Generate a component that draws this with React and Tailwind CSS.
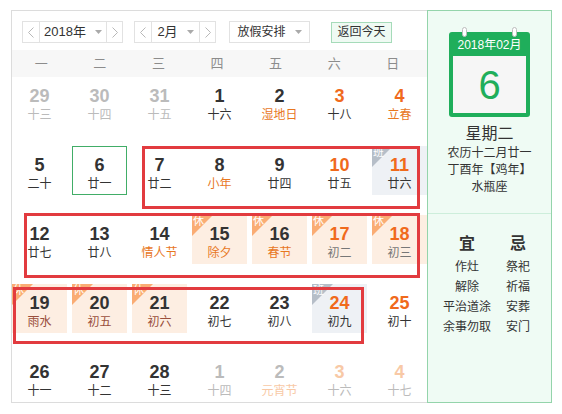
import React from 'react';

const FONT = "font-['Liberation_Sans','Noto_Sans_CJK_SC',sans-serif]";

// n = number colour, l = lunar colour, tag = 休/班 badge
const D = 'text-[#333]';
const O = 'text-[#f06a1c]';
const LO = 'text-[#e8771f]';
const G = 'text-[#bbbbbb]';
const GO = 'text-[#f8c9a6]';

const rows = [
  [
    { d: 29, t: '十三', n: G, l: G },
    { d: 30, t: '十四', n: G, l: G },
    { d: 31, t: '十五', n: G, l: G },
    { d: 1, t: '十六', n: D, l: D },
    { d: 2, t: '湿地日', n: D, l: LO },
    { d: 3, t: '十八', n: O, l: D },
    { d: 4, t: '立春', n: O, l: LO },
  ],
  [
    { d: 5, t: '二十', n: D, l: D },
    { d: 6, t: '廿一', n: D, l: D, today: true },
    { d: 7, t: '廿二', n: D, l: D },
    { d: 8, t: '小年', n: D, l: LO },
    { d: 9, t: '廿四', n: D, l: D },
    { d: 10, t: '廿五', n: O, l: D },
    { d: 11, t: '廿六', n: O, l: D, tag: '班' },
  ],
  [
    { d: 12, t: '廿七', n: D, l: D },
    { d: 13, t: '廿八', n: D, l: D },
    { d: 14, t: '情人节', n: D, l: LO },
    { d: 15, t: '除夕', n: D, l: LO, tag: '休' },
    { d: 16, t: '春节', n: D, l: LO, tag: '休' },
    { d: 17, t: '初二', n: O, l: 'text-[#777]', tag: '休' },
    { d: 18, t: '初三', n: O, l: 'text-[#777]', tag: '休' },
  ],
  [
    { d: 19, t: '雨水', n: D, l: 'text-[#9a4f3c]', tag: '休' },
    { d: 20, t: '初五', n: D, l: 'text-[#9a4f3c]', tag: '休' },
    { d: 21, t: '初六', n: D, l: 'text-[#9a4f3c]', tag: '休' },
    { d: 22, t: '初七', n: D, l: D },
    { d: 23, t: '初八', n: D, l: D },
    { d: 24, t: '初九', n: O, l: D, tag: '班' },
    { d: 25, t: '初十', n: O, l: D },
  ],
  [
    { d: 26, t: '十一', n: D, l: D },
    { d: 27, t: '十二', n: D, l: D },
    { d: 28, t: '十三', n: D, l: D },
    { d: 1, t: '十四', n: G, l: G },
    { d: 2, t: '元宵节', n: G, l: GO },
    { d: 3, t: '十六', n: GO, l: G },
    { d: 4, t: '十七', n: GO, l: G },
  ],
];

const Chev = ({ dir }) => (
  <svg width="6" height="11" viewBox="0 0 6 11">
    <path
      d={dir === 'l' ? 'M5.5 0.5L0.5 5.5L5.5 10.5' : 'M0.5 0.5L5.5 5.5L0.5 10.5'}
      fill="none"
      stroke="#b8b8b8"
      strokeWidth="1"
    />
  </svg>
);

const Caret = () => (
  <svg width="7" height="4" viewBox="0 0 7 4">
    <polygon points="0,0 7,0 3.5,4" fill="#aaaaaa" />
  </svg>
);

function Picker({ label, w }) {
  return (
    <div className={`flex h-[22px] border border-[#e2e2e2] bg-white ${w}`}>
      <div className="w-[16px] flex items-center justify-center">
        <Chev dir="l" />
      </div>
      <div className="flex-1 flex items-center justify-center gap-[9px] border-x border-[#e2e2e2] text-[13px] text-[#333]">
        <span>{label}</span>
        <Caret />
      </div>
      <div className="w-[15px] flex items-center justify-center">
        <Chev dir="r" />
      </div>
    </div>
  );
}

function Cell({ c }) {
  const bg = c.tag === '休' ? 'bg-[#fdeee2]' : c.tag === '班' ? 'bg-[#eef1f5]' : '';
  const ring = c.today ? 'shadow-[inset_0_0_0_1px_#41ad67]' : '';
  return (
    <div className={`relative h-[49px] flex flex-col items-center pt-[9px] ${bg} ${ring}`}>
      {c.tag && (
        <div className="absolute left-0 top-0 w-[21px] h-[21px]">
          <svg className="absolute inset-0" width="21" height="21" viewBox="0 0 21 21">
            <polygon points="0,0 21,0 0,21" fill={c.tag === '休' ? '#faac74' : '#b6bec8'} />
          </svg>
          <span className="absolute left-[1px] top-0 text-[11px] leading-[12px] text-white">{c.tag}</span>
        </div>
      )}
      <div className={`relative text-[18px] leading-[20px] font-bold ${c.n}`}>{c.d}</div>
      <div className={`relative text-[12px] leading-[18px] whitespace-nowrap ${c.l}`}>{c.t}</div>
    </div>
  );
}

export default function App() {
  const week = ['一', '二', '三', '四', '五', '六', '日'];
  return (
    <div className={`relative w-[562px] h-[414px] bg-white overflow-hidden ${FONT}`}>
      <div className="flex pt-[10px] pl-[11px]">
        {/* calendar */}
        <div className="w-[416px] h-[393px] border-l border-t border-b border-[#dcdcdc]">
          <div className="flex items-center h-[22px] mt-[10px] ml-[10px]">
            <Picker label="2018年" w="w-[101px]" />
            <div className="ml-[11px]">
              <Picker label="2月" w="w-[82px]" />
            </div>
            <div className="ml-[13px] w-[81px] h-[22px] border border-[#e2e2e2] flex items-center justify-center gap-[9px] text-[12px] text-[#333]">
              <span>放假安排</span>
              <Caret />
            </div>
            <button className="ml-[21px] w-[61px] h-[21px] border border-[#a5dbb9] bg-[#effaf3] text-[12px] leading-[19px] text-[#333]">
              返回今天
            </button>
          </div>

          <div className="mt-[7px] h-[27px] bg-[#f7f7f7]">
            <div className="w-[410px] h-full grid grid-cols-7 items-center text-[13px] text-[#8c8c8c]">
              {week.map((w) => (
                <div key={w} className="text-center">{w}</div>
              ))}
            </div>
          </div>

          <div className="grid grid-cols-[repeat(7,55px)] gap-x-[5px] gap-y-[20px]">
            {rows.flat().map((c, i) => (
              <Cell key={i} c={c} />
            ))}
          </div>
        </div>

        {/* side panel */}
        <div className="w-[125px] h-[393px] border border-[#94d4ab] bg-[#effbf4] text-[#333]">
          <div className="h-[203px] border-b border-[#cdeedb] flex flex-col items-center">
            <div className="relative mt-[21px] w-[81px] rounded-[3px] bg-[#1fae5b] px-[4px] pb-[4px]">
              <span className="absolute left-[13px] top-[-5px] w-[5px] h-[10px] rounded-full bg-white border border-[#bdbdbd]" />
              <span className="absolute left-[63px] top-[-5px] w-[5px] h-[10px] rounded-full bg-white border border-[#bdbdbd]" />
              <div className="h-[24px] text-center text-[12px] leading-[26px] text-white">2018年02月</div>
              <div className="h-[57px] bg-[#f6f6f6] flex items-center justify-center text-[40px] leading-none text-[#1fae5b]">
                6
              </div>
            </div>
            <div className="mt-[6px] text-center">
              <div className="text-[16px] leading-[22px]">星期二</div>
              <div className="text-[12px] leading-[17px]">农历十二月廿一</div>
              <div className="text-[12px] leading-[17px]">丁酉年【鸡年】</div>
              <div className="text-[12px] leading-[17px]">水瓶座</div>
            </div>
          </div>
          <div className="flex pt-[20px] pl-[12px] text-[12px] leading-[20px]">
            <div className="w-[54px] text-center">
              <div className="text-[16px] font-bold mb-[3px]">宜</div>
              <div>作灶</div>
              <div>解除</div>
              <div>平治道涂</div>
              <div>余事勿取</div>
            </div>
            <div className="w-[48px] text-center">
              <div className="text-[16px] font-bold mb-[3px]">忌</div>
              <div>祭祀</div>
              <div>祈福</div>
              <div>安葬</div>
              <div>安门</div>
            </div>
          </div>
        </div>
      </div>

      {/* red annotation boxes */}
      <div className="absolute left-[142px] top-[146px] w-[278px] h-[63px] border-[3px] border-[#e23b3f]" />
      <div className="absolute left-[24px] top-[213px] w-[396px] h-[65px] border-[3px] border-[#e23b3f]" />
      <div className="absolute left-[13px] top-[287px] w-[351px] h-[57px] border-[3px] border-[#e23b3f]" />
    </div>
  );
}
